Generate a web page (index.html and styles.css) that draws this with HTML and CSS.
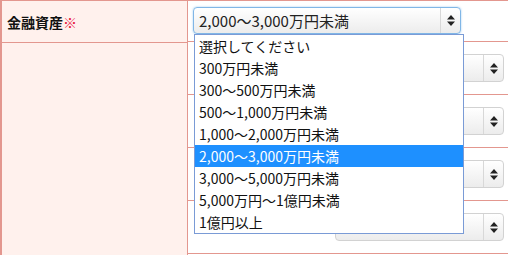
FILE: index.html
```html
<!DOCTYPE html>
<html lang="ja">
<head>
<meta charset="UTF-8">
<meta name="viewport" content="width=device-width, initial-scale=1.0">
<title>金融資産</title>
<link rel="stylesheet" href="styles.css">
</head>
<body>
<div class="sheet">
    <div class="side">
        <div class="label">金融資産<span class="req">※</span></div>
        <div class="rest"></div>
    </div>
    <div class="main">
        <div class="row first">
            <div class="select focused">
                <span class="value">2,000〜3,000万円未満</span>
                <span class="arrow">
                    <svg width="8" height="11" viewBox="0 0 8 11"><path d="M0 4.5L4 0L8 4.5Z M0 6.5L4 11L8 6.5Z" fill="#222"/></svg>
                </span>
            </div>
            <ul class="dropdown">
                <li>選択してください</li>
                <li>300万円未満</li>
                <li>300〜500万円未満</li>
                <li>500〜1,000万円未満</li>
                <li>1,000〜2,000万円未満</li>
                <li class="active">2,000〜3,000万円未満</li>
                <li>3,000〜5,000万円未満</li>
                <li>5,000万円〜1億円未満</li>
                <li>1億円以上</li>
            </ul>
        </div>
        <div class="row">
            <div class="select small">
                <span class="value"></span>
                <span class="arrow">
                    <svg width="8" height="11" viewBox="0 0 8 11"><path d="M0 4.5L4 0L8 4.5Z M0 6.5L4 11L8 6.5Z" fill="#222"/></svg>
                </span>
            </div>
        </div>
        <div class="row">
            <div class="select small">
                <span class="value"></span>
                <span class="arrow">
                    <svg width="8" height="11" viewBox="0 0 8 11"><path d="M0 4.5L4 0L8 4.5Z M0 6.5L4 11L8 6.5Z" fill="#222"/></svg>
                </span>
            </div>
        </div>
        <div class="row">
            <div class="select small">
                <span class="value"></span>
                <span class="arrow">
                    <svg width="8" height="11" viewBox="0 0 8 11"><path d="M0 4.5L4 0L8 4.5Z M0 6.5L4 11L8 6.5Z" fill="#222"/></svg>
                </span>
            </div>
        </div>
        <div class="row">
            <div class="select small">
                <span class="value"></span>
                <span class="arrow">
                    <svg width="8" height="11" viewBox="0 0 8 11"><path d="M0 4.5L4 0L8 4.5Z M0 6.5L4 11L8 6.5Z" fill="#222"/></svg>
                </span>
            </div>
        </div>
    </div>
</div>
</body>
</html>
```

FILE: styles.css
```css
body {
    margin: 0;
    font-family: "Noto Sans CJK JP", sans-serif;
    font-size: 14px;
    color: #222;
    background: #fff;
    overflow: hidden;
}
.sheet {
    display: flex;
    width: 508px;
    box-sizing: border-box;
    border-top: 1px solid #e3978f;
    border-left: 2px solid #e3978f;
}
.side {
    width: 185px;
    flex-shrink: 0;
    background-color: #fff1ed;
    border-right: 1px solid #e3978f;
}
.label {
    height: 41px;
    border-bottom: 1px solid #e3978f;
    display: flex;
    align-items: center;
    padding-left: 5px;
    font-weight: bold;
    color: #111;
}
.req {
    color: #e8103a;
    font-weight: normal;
}
.rest {
    height: 212px;
}
.main {
    flex: 1;
}
.row {
    position: relative;
    height: 52px;
    border-bottom: 1px solid #e3978f;
    display: flex;
    align-items: center;
    padding: 0 4px 0 5px;
}
.row.first {
    height: 41px;
    align-items: flex-start;
    padding-top: 6px;
    box-sizing: border-box;
}
.select {
    display: flex;
    box-sizing: border-box;
    border: 1px solid #d2d2d2;
    border-radius: 4px;
    background: linear-gradient(#ffffff, #ececec);
}
.select.focused {
    width: 268px;
    height: 27px;
    border-color: #80b6e6;
    box-shadow: 0 0 2px rgba(102, 175, 233, 0.7);
}
.select.small {
    width: 169px;
    height: 28px;
    margin-left: auto;
}
.value {
    flex: 1;
    padding-left: 5px;
    font-size: 15px;
    line-height: 25px;
}
.arrow {
    width: 19px;
    border-left: 1px solid #d8d8d8;
    display: flex;
    align-items: center;
    justify-content: center;
}
.dropdown {
    position: absolute;
    top: 33px;
    left: 6px;
    width: 270px;
    box-sizing: border-box;
    margin: 0;
    padding: 0;
    list-style: none;
    background: #fff;
    border: 1px solid #7a9bd6;
    z-index: 5;
}
.dropdown li {
    height: 22px;
    line-height: 22px;
    padding-left: 4px;
    color: #111;
}
.dropdown li.active {
    background-color: #1e90ff;
    color: #fff;
}
```
